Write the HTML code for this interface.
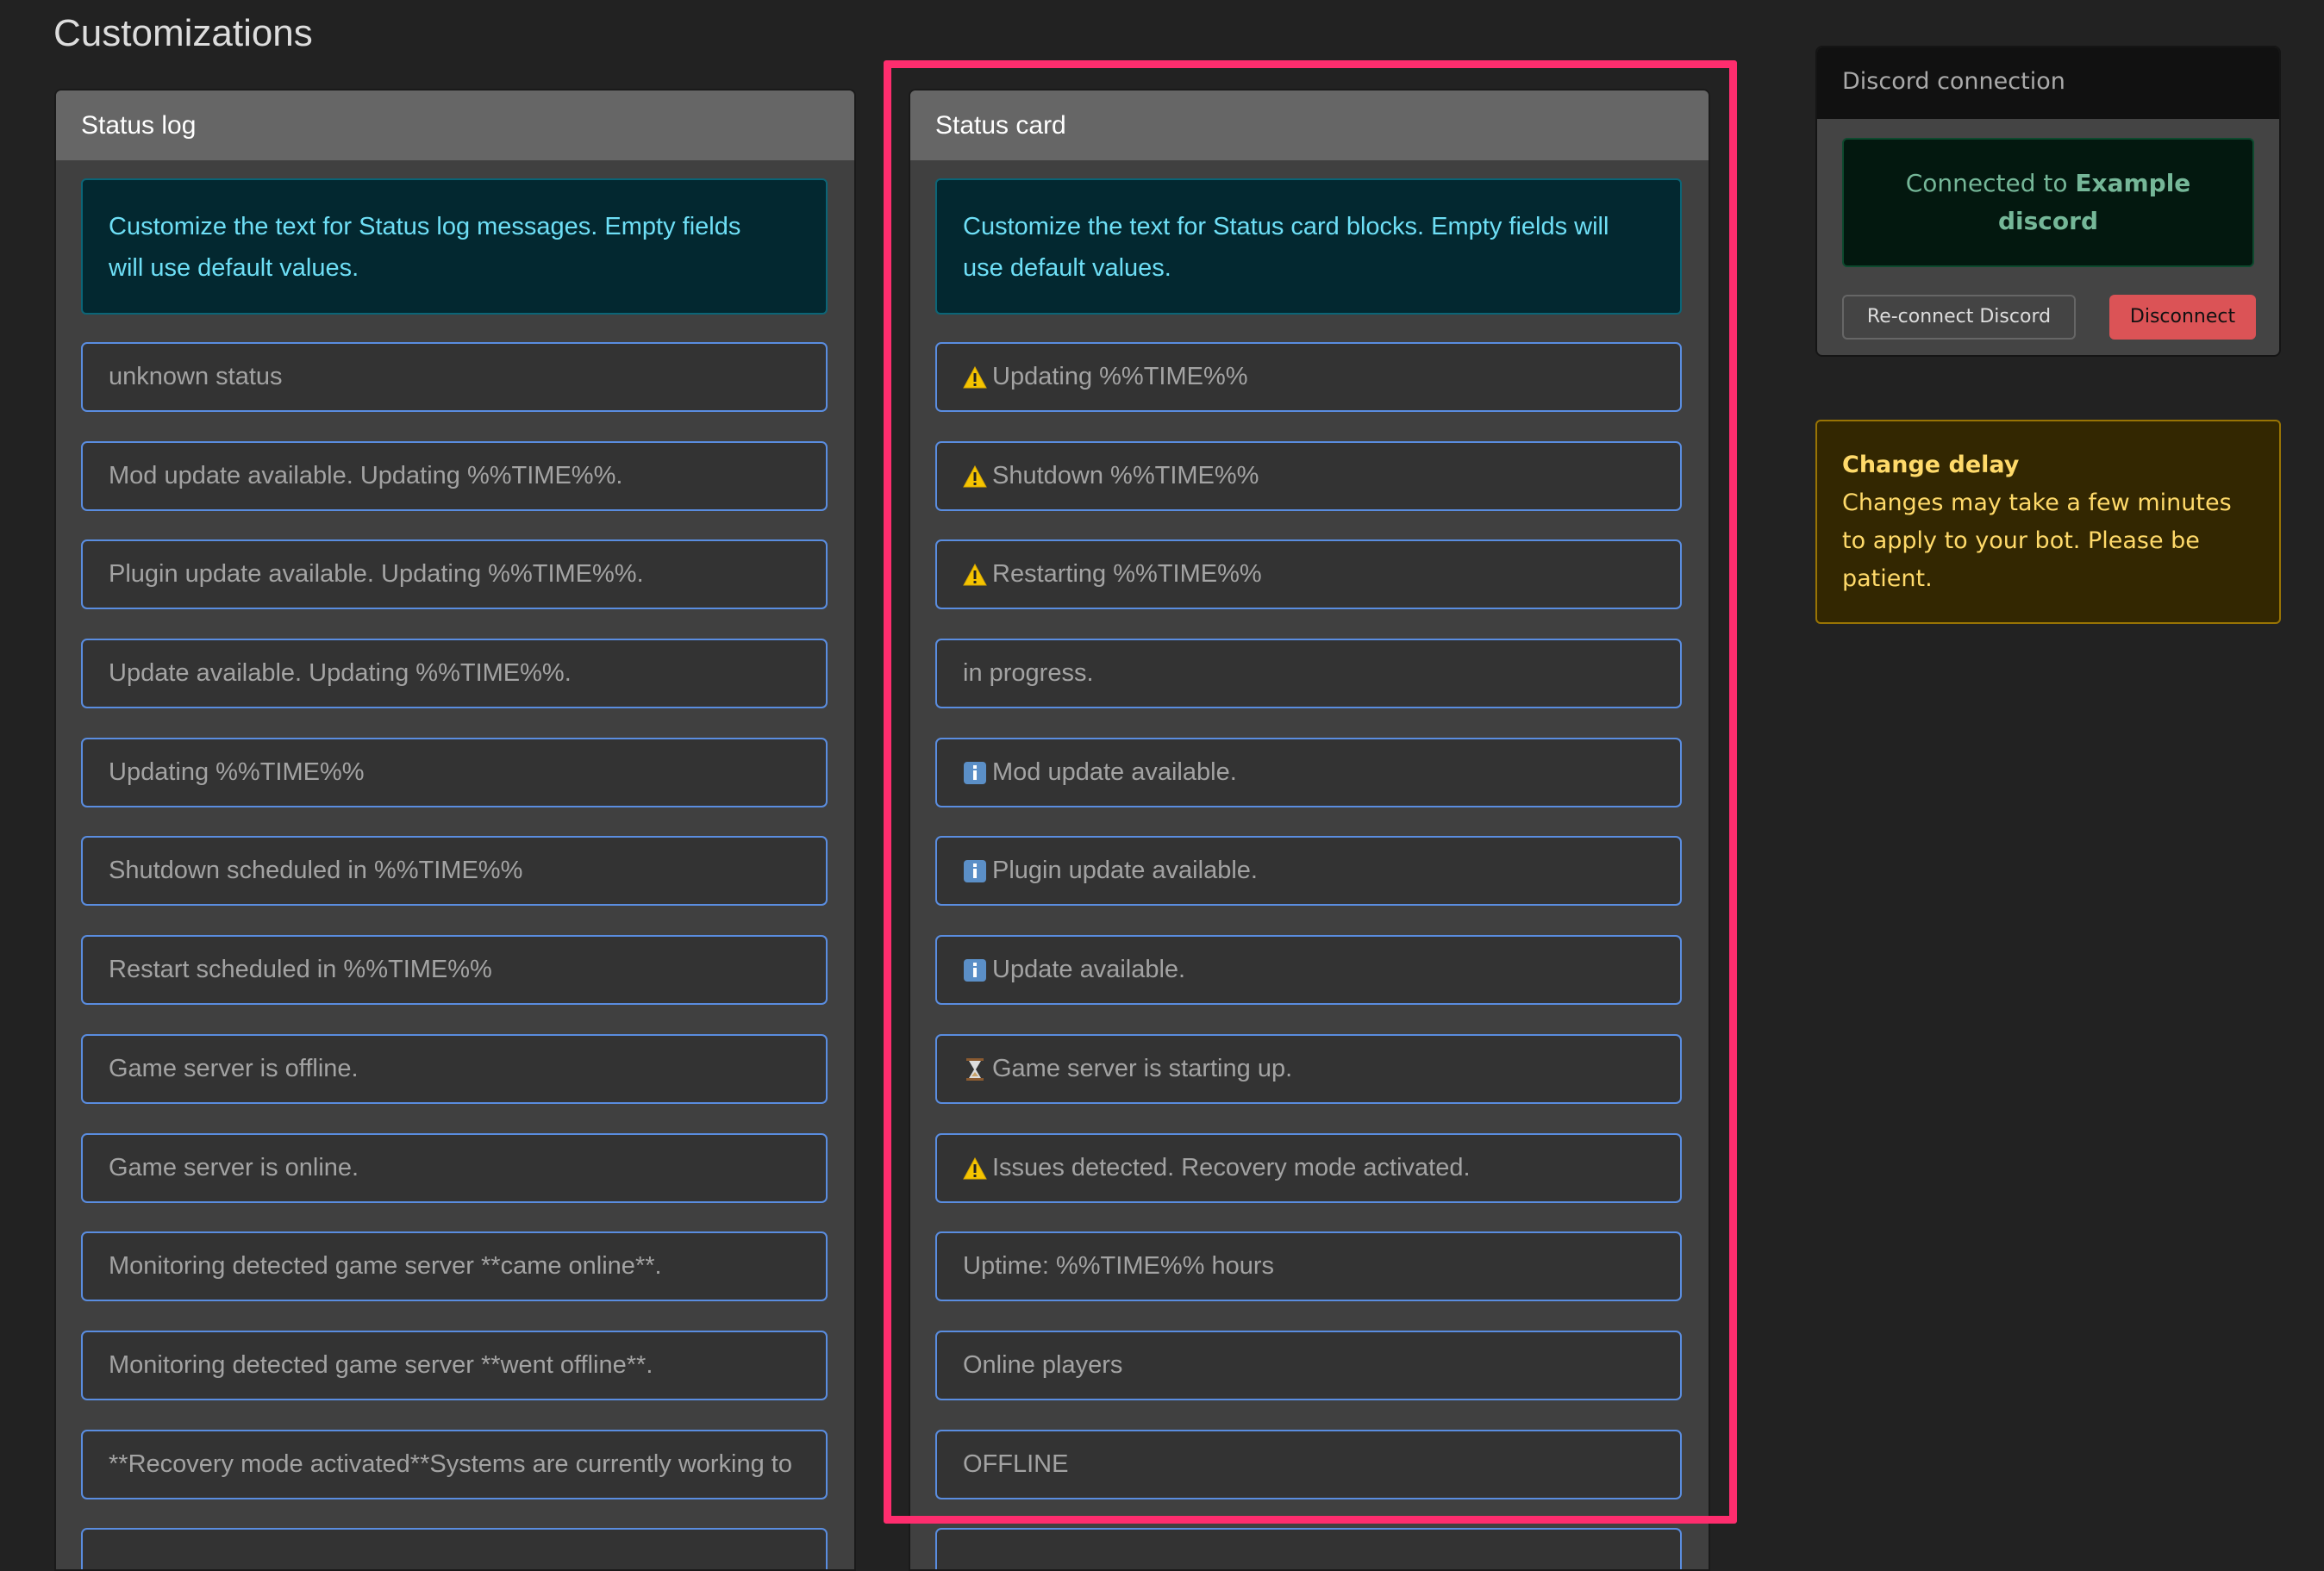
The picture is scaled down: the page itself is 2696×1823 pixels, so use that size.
<!DOCTYPE html>
<html><head><style>
*{box-sizing:border-box;margin:0;padding:0}
body{width:2696px;height:1802px;background:#222;position:relative;overflow:hidden;font-family:"Liberation Sans",sans-serif}
.a{position:absolute}
.card{position:absolute;top:103px;height:1720px;background:#404040;border-radius:8px 8px 0 0;border:2px solid #1a1a1a;overflow:hidden}
.hd{height:81px;background:#666;color:#fff;font-size:30px;padding:24px 0 0 29px}
.info{position:absolute;left:29px;top:102px;width:866px;height:158px;background:#032830;border:2px solid #0b6577;border-radius:6px;color:#6edff6;font-size:29px;line-height:48px;padding:30px 70px 30px 30px}
.in{position:absolute;left:29px;width:866px;height:81px;background:#333;border:2px solid #5a8de0;border-radius:7px;color:#a3a3a3;font-size:29px;padding:0 30px;display:flex;align-items:center;white-space:nowrap;overflow:hidden}
.in svg{margin-right:6px;flex:none}
.r{font-family:"DejaVu Sans",sans-serif}
</style></head><body>
<div class="a" style="left:62px;top:14px;color:#ddd;font-size:44px">Customizations</div>

<div class="card" style="left:63px;width:930px">
<div class="hd">Status log</div>
<div class="info">Customize the text for Status log messages. Empty fields will use default values.</div>
<div class="in" style="top:292px">unknown status</div>
<div class="in" style="top:407px">Mod update available. Updating %%TIME%%.</div>
<div class="in" style="top:521px">Plugin update available. Updating %%TIME%%.</div>
<div class="in" style="top:636px">Update available. Updating %%TIME%%.</div>
<div class="in" style="top:751px">Updating %%TIME%%</div>
<div class="in" style="top:865px">Shutdown scheduled in %%TIME%%</div>
<div class="in" style="top:980px">Restart scheduled in %%TIME%%</div>
<div class="in" style="top:1095px">Game server is offline.</div>
<div class="in" style="top:1210px">Game server is online.</div>
<div class="in" style="top:1324px">Monitoring detected game server **came online**.</div>
<div class="in" style="top:1439px">Monitoring detected game server **went offline**.</div>
<div class="in" style="top:1554px">**Recovery mode activated**Systems are currently working to</div>
<div class="in" style="top:1668px"></div>
</div>

<div class="card" style="left:1054px;width:930px">
<div class="hd">Status card</div>
<div class="info">Customize the text for Status card blocks. Empty fields will use default values.</div>
<div class="in" style="top:292px"><svg width="28" height="26" viewBox="0 0 28 26"><path d="M14 1L27 25H1Z" fill="#f5c400" stroke="#d9a800"/><rect x="12.5" y="8" width="3" height="10" fill="#222"/><rect x="12.5" y="20" width="3" height="3" fill="#222"/></svg>Updating %%TIME%%</div>
<div class="in" style="top:407px"><svg width="28" height="26" viewBox="0 0 28 26"><path d="M14 1L27 25H1Z" fill="#f5c400" stroke="#d9a800"/><rect x="12.5" y="8" width="3" height="10" fill="#222"/><rect x="12.5" y="20" width="3" height="3" fill="#222"/></svg>Shutdown %%TIME%%</div>
<div class="in" style="top:521px"><svg width="28" height="26" viewBox="0 0 28 26"><path d="M14 1L27 25H1Z" fill="#f5c400" stroke="#d9a800"/><rect x="12.5" y="8" width="3" height="10" fill="#222"/><rect x="12.5" y="20" width="3" height="3" fill="#222"/></svg>Restarting %%TIME%%</div>
<div class="in" style="top:636px">in progress.</div>
<div class="in" style="top:751px"><svg width="28" height="28" viewBox="0 0 28 28"><rect x="1" y="1" width="26" height="26" rx="4" fill="#5b8fc7"/><rect x="12" y="11" width="4" height="11" fill="#fff"/><rect x="12" y="5" width="4" height="4" fill="#fff"/></svg>Mod update available.</div>
<div class="in" style="top:865px"><svg width="28" height="28" viewBox="0 0 28 28"><rect x="1" y="1" width="26" height="26" rx="4" fill="#5b8fc7"/><rect x="12" y="11" width="4" height="11" fill="#fff"/><rect x="12" y="5" width="4" height="4" fill="#fff"/></svg>Plugin update available.</div>
<div class="in" style="top:980px"><svg width="28" height="28" viewBox="0 0 28 28"><rect x="1" y="1" width="26" height="26" rx="4" fill="#5b8fc7"/><rect x="12" y="11" width="4" height="11" fill="#fff"/><rect x="12" y="5" width="4" height="4" fill="#fff"/></svg>Update available.</div>
<div class="in" style="top:1095px"><svg width="28" height="28" viewBox="0 0 28 28"><rect x="4" y="1" width="20" height="3" fill="#8a5a30"/><rect x="4" y="24" width="20" height="3" fill="#8a5a30"/><path d="M7 4H21L15 14L21 24H7L13 14Z" fill="#ddd"/><path d="M10 22H18L14 17Z" fill="#c9a36a"/></svg>Game server is starting up.</div>
<div class="in" style="top:1210px"><svg width="28" height="26" viewBox="0 0 28 26"><path d="M14 1L27 25H1Z" fill="#f5c400" stroke="#d9a800"/><rect x="12.5" y="8" width="3" height="10" fill="#222"/><rect x="12.5" y="20" width="3" height="3" fill="#222"/></svg>Issues detected. Recovery mode activated.</div>
<div class="in" style="top:1324px">Uptime: %%TIME%% hours</div>
<div class="in" style="top:1439px">Online players</div>
<div class="in" style="top:1554px">OFFLINE</div>
<div class="in" style="top:1668px"></div>
</div>

<div class="a" style="left:1025px;top:70px;width:990px;height:1698px;border:9px solid #fe2d6e;border-radius:3px"></div>

<div class="a r" style="left:2106px;top:53px;width:540px;height:361px;background:#444;border:2px solid #151515;border-radius:8px;overflow:hidden">
<div style="height:83px;background:#111;color:#aaa;font-size:27px;padding:24px 0 0 29px">Discord connection</div>
<div class="a" style="left:29px;top:105px;width:478px;height:150px;background:#03180f;border:2px solid #0d4a2e;border-radius:6px;color:#75b798;font-size:28px;line-height:44px;text-align:center;padding:29px 60px">Connected to <b>Example discord</b></div>
<div class="a" style="left:29px;top:287px;width:271px;height:52px;border:2px solid #666;border-radius:6px;color:#ddd;font-size:22px;text-align:center;line-height:48px">Re-connect Discord</div>
<div class="a" style="left:339px;top:287px;width:170px;height:52px;background:#db5356;border-radius:6px;color:#111;font-size:22px;text-align:center;line-height:52px">Disconnect</div>
</div>

<div class="a r" style="left:2106px;top:487px;width:540px;height:237px;background:#332701;border:2px solid #997404;border-radius:6px;color:#ffda6a;font-size:27px;line-height:44px;padding:29px 29px">
<b>Change delay</b><br>Changes may take a few minutes to apply to your bot. Please be patient.</div>
</body></html>
